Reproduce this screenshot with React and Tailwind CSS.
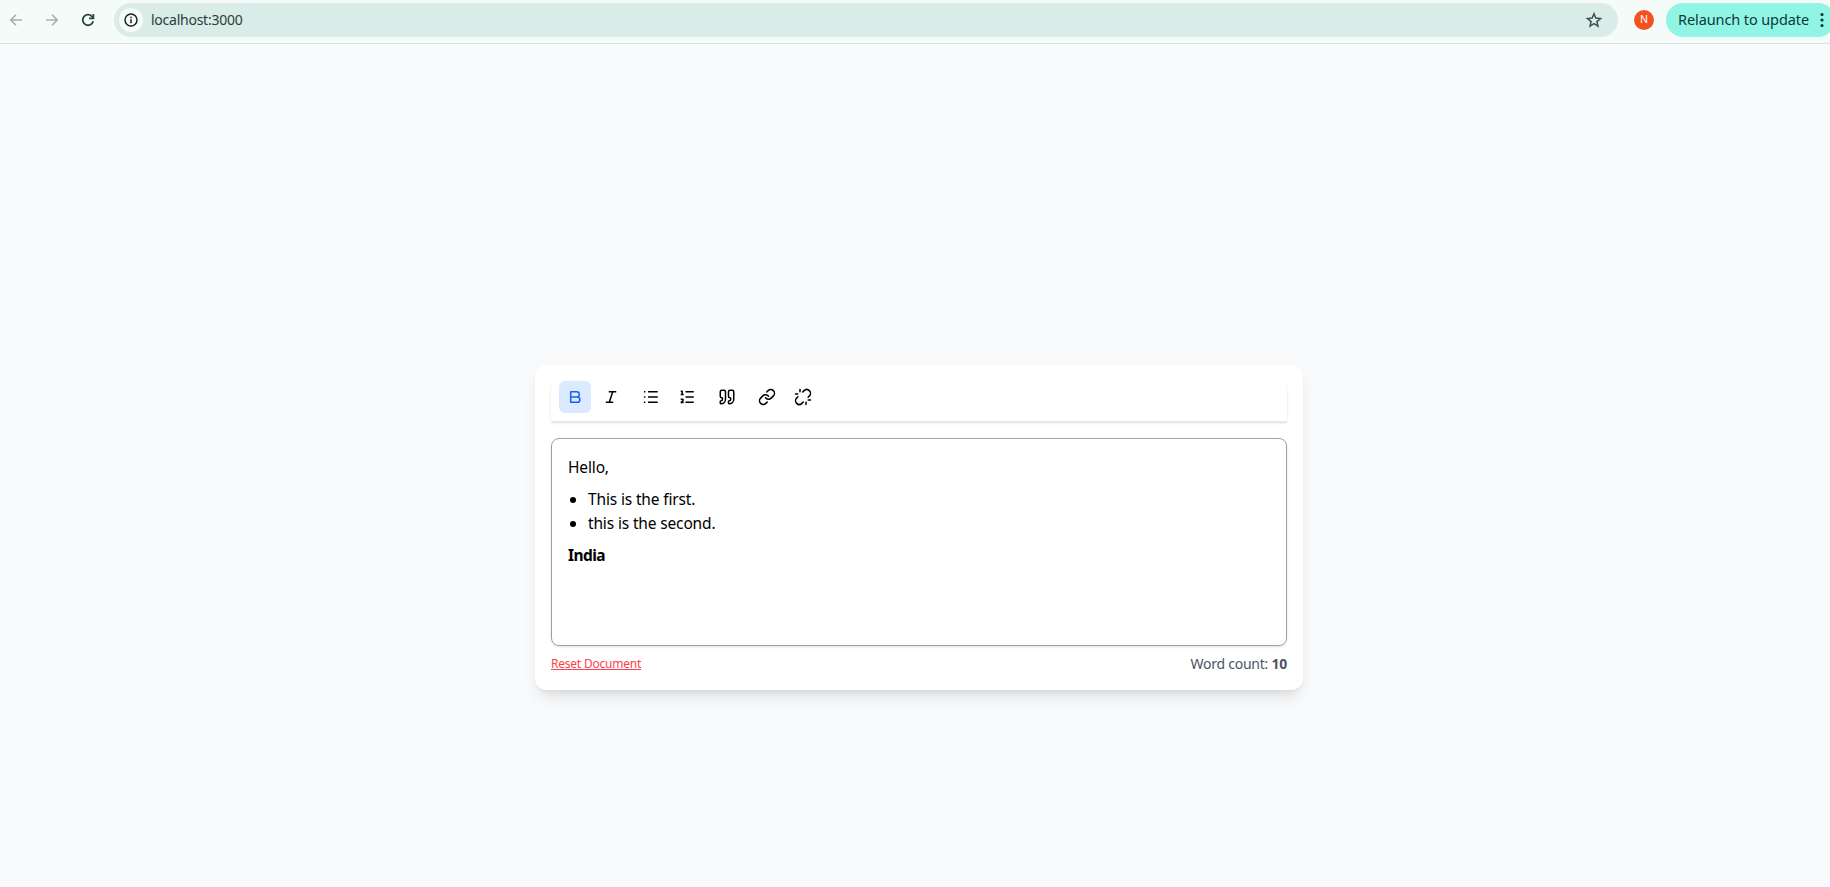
import { Link, Quote, Unlink } from "lucide-react";

function Tool({ active, label, children }) {
  return (
    <button
      aria-label={label}
      className={
        active
          ? "flex size-8 items-center justify-center rounded-md bg-blue-100 text-blue-600"
          : "flex size-8 items-center justify-center rounded-md text-black"
      }
    >
      {children}
    </button>
  );
}

function Glyph({ children }) {
  return (
    <svg width="18" height="18" viewBox="0 0 24 24" fill="none" stroke="currentColor" strokeWidth="2" strokeLinejoin="round">
      {children}
    </svg>
  );
}

function BrowserBar() {
  return (
    <header className="flex h-11 shrink-0 items-center overflow-hidden border-b border-[#d3e4e0] bg-[#f4fbf9] pb-1">
      <div className="flex w-[114px] shrink-0 items-center gap-4 pl-1.5">
        <svg width="20" height="20" viewBox="0 0 20 20" fill="none" stroke="#a5b0ad" strokeWidth="1.6">
          <path d="M16 10H5M10 4.8L4.8 10l5.2 5.2" />
        </svg>
        <svg width="20" height="20" viewBox="0 0 20 20" fill="none" stroke="#a5b0ad" strokeWidth="1.6">
          <path d="M4 10h11M10 4.8l5.2 5.2-5.2 5.2" />
        </svg>
        <svg width="20" height="20" viewBox="0 0 20 20" fill="none" stroke="#2c4641" strokeWidth="1.8">
          <path d="M15.2 11.2A5.3 5.3 0 1 1 13.9 6.3L15.6 8" />
          <path d="M15.4 4v4.4H11" />
        </svg>
      </div>
      <div className="flex h-[34px] w-[1504px] shrink-0 items-center rounded-full bg-[#daece7] pl-[5px] pr-3.5">
        <span className="flex size-6 items-center justify-center rounded-full bg-[#f4fbf9]">
          <svg width="16" height="16" viewBox="0 0 16 16" fill="none" stroke="#1b2422" strokeWidth="1.5">
            <circle cx="8" cy="8" r="6" />
            <path d="M8 7.3v3.9M8 4.8v1.5" />
          </svg>
        </span>
        <span className="ml-2 font-['Noto_Sans',sans-serif] text-[14px] leading-5 tracking-[-0.25px] text-[#2f3b38]">localhost:3000</span>
        <svg className="ml-auto" width="20" height="20" viewBox="0 0 20 20" fill="none" stroke="#43504d" strokeWidth="1.5">
          <path d="M10 3.8l1.8 4.3 4.7.4-3.6 3.1 1.1 4.6-4-2.5-4 2.5 1.1-4.6-3.6-3.1 4.7-.4z" />
        </svg>
      </div>
      <span className="ml-4 flex size-5 shrink-0 items-center justify-center rounded-full bg-[#f4511e] font-['Noto_Sans',sans-serif] text-[10.5px] text-white">N</span>
      <div className="ml-3 flex h-[34px] w-[169px] shrink-0 items-center rounded-full bg-[#91f5e6] pl-3">
        <span className="whitespace-nowrap font-['Noto_Sans',sans-serif] text-[14.5px] tracking-[-0.1px] text-[#0c3a34]">Relaunch to update</span>
        <svg className="ml-[11px] shrink-0" width="4" height="16" viewBox="0 0 4 16" fill="#0c3a34">
          <circle cx="2" cy="2.5" r="1.6" />
          <circle cx="2" cy="8" r="1.6" />
          <circle cx="2" cy="13.5" r="1.6" />
        </svg>
      </div>
    </header>
  );
}

export default function App() {
  return (
    <div className="flex h-screen flex-col overflow-hidden bg-gray-50 font-['Noto_Sans',sans-serif]">
      <BrowserBar />
      <main className="flex flex-1 justify-center pl-2 pt-[321px]">
        <section className="flex h-[325px] w-[768px] flex-col rounded-xl bg-white p-4 shadow-lg">
          <div className="flex h-[41px] shrink-0 gap-2 rounded-t-lg border-b border-gray-200 px-2 shadow-sm">
            <div className="flex gap-1">
              <Tool active label="Bold">
                <Glyph><path d="M6.3 5h7.9a3.5 3.5 0 0 1 0 7H6.3zM6.3 12h8.7a3.5 3.5 0 0 1 0 7H6.3z" /></Glyph>
              </Tool>
              <Tool label="Italic">
                <Glyph><path d="M9 5h10M5 19h10M14.3 5l-4.6 14" /></Glyph>
              </Tool>
            </div>
            <div className="flex gap-1">
              <Tool label="Bullet list">
                <Glyph><path d="M8 5h13M8 12h13M8 19h13M2.6 5h1.9M2.6 12h1.9M2.6 19h1.9" /></Glyph>
              </Tool>
              <Tool label="Numbered list">
                <Glyph>
                  <path d="M10 5h11M10 12h11M10 19h11" />
                  <path d="M3.6 4.4h2v4M3.6 8.6h4M3.6 15h2.2c1.4 0 1.4 1.6.3 2.4L4.3 19.2h3.3" />
                </Glyph>
              </Tool>
            </div>
            <Tool label="Quote"><Quote size={18} /></Tool>
            <div className="flex gap-1">
              <Tool label="Link"><Link size={18} /></Tool>
              <Tool label="Unlink"><Unlink size={18} /></Tool>
            </div>
          </div>
          <div className="mt-4 h-52 shrink-0 rounded-lg border border-gray-400 px-4 py-4 text-[15.5px] leading-6 tracking-[-0.15px] text-black shadow-sm">
            <p>Hello,</p>
            <ul className="my-2 list-disc pl-5">
              <li>This is the first.</li>
              <li>this is the second.</li>
            </ul>
            <p className="font-bold tracking-[-0.55px]">India</p>
          </div>
          <div className="mt-2 flex items-center justify-between">
            <button className="text-xs tracking-[-0.22px] text-[#fd404a] underline">Reset Document</button>
            <p className="text-sm tracking-[-0.25px] text-gray-600">Word count: <strong>10</strong></p>
          </div>
        </section>
      </main>
    </div>
  );
}
